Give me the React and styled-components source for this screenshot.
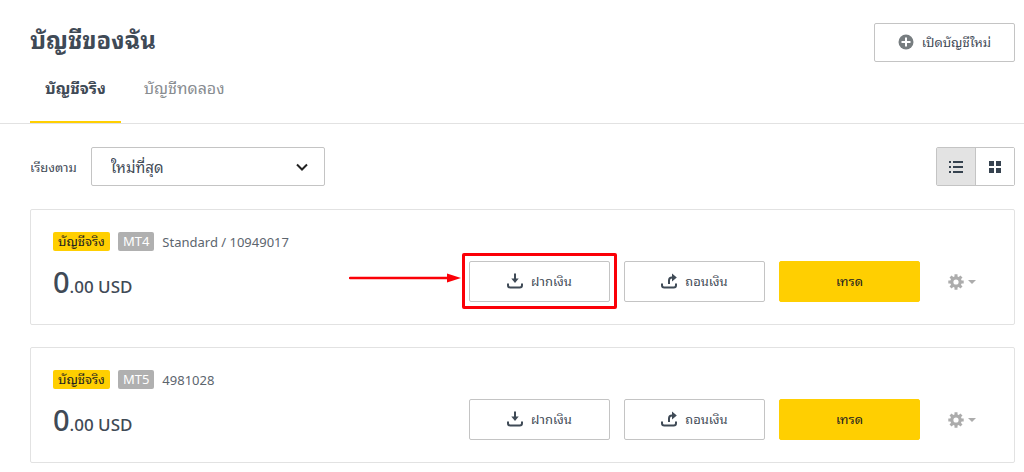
import React from "react";
import styled, { createGlobalStyle, css } from "styled-components";

const COLORS = {
  text: "#3f4a56",
  textLight: "#888c90",
  border: "#c4c4c4",
  line: "#e2e2e2",
  accent: "#ffcf01",
  callout: "#fb0007",
};

const GlobalStyle = createGlobalStyle`
  * {
    box-sizing: border-box;
  }

  body {
    margin: 0;
    background: #fff;
    color: ${COLORS.text};
    font-family: "Noto Sans", "Noto Sans Thai Looped", "Noto Looped Thai", Loma, Garuda, Waree, sans-serif;
    font-size: 13px;
    line-height: 20px;
  }

  button,
  select {
    font: inherit;
    color: inherit;
  }

  h1,
  p {
    margin: 0;
  }
`;

const Header = styled.header`
  display: flex;
  align-items: flex-start;
  justify-content: space-between;
  padding: 23px 9px 0 30px;
  border-bottom: 1px solid ${COLORS.line};
`;

const Title = styled.h1`
  font-size: 24px;
  font-weight: 700;
  line-height: 33px;
`;

const Tabs = styled.nav`
  display: flex;
  gap: 8px;
`;

const Tab = styled.a`
  height: 67px;
  padding: 20px 15px 0;
  font-size: 16px;
  line-height: 24px;
  text-decoration: none;
  color: ${({ $active }) => ($active ? COLORS.text : COLORS.textLight)};
  font-weight: ${({ $active }) => ($active ? 700 : 400)};
  border-bottom: 2px solid
    ${({ $active }) => ($active ? COLORS.accent : "transparent")};
`;

const Button = styled.button`
  display: flex;
  align-items: center;
  justify-content: center;
  gap: 8px;
  width: 141px;
  height: ${({ $compact }) => ($compact ? "39px" : "41px")};
  padding: 0 0 2px;
  background: #fff;
  border: 1px solid ${COLORS.border};
  border-radius: 2px;
  white-space: nowrap;
  cursor: pointer;

  ${({ $primary }) =>
    $primary &&
    css`
      background: ${COLORS.accent};
      border-color: ${COLORS.accent};
      color: #222;
    `}
`;

const Toolbar = styled.div`
  display: flex;
  align-items: center;
  justify-content: space-between;
  padding: 23px 9px 23px 30px;
`;

const Sort = styled.div`
  display: flex;
  align-items: center;
  gap: 14px;
`;

const SelectWrapper = styled.div`
  display: grid;
  align-items: center;
  width: 234px;

  & > * {
    grid-area: 1 / 1;
  }

  & svg {
    justify-self: end;
    margin-right: 16px;
    pointer-events: none;
  }
`;

const Select = styled.select`
  appearance: none;
  width: 100%;
  height: 39px;
  padding: 0 40px 0 19px;
  font-size: 15px;
  background: #fff;
  border: 1px solid ${COLORS.border};
  border-radius: 2px;
`;

const ViewSwitch = styled.div`
  display: flex;
  border: 1px solid ${COLORS.border};
  border-radius: 2px;
`;

const ViewButton = styled.button`
  display: flex;
  align-items: center;
  justify-content: center;
  width: 38px;
  height: 37px;
  padding: 0;
  border: none;
  background: ${({ $active }) => ($active ? "#e3e3e3" : "#fff")};
  cursor: pointer;

  & + & {
    width: 39px;
    border-left: 1px solid ${COLORS.border};
  }
`;

const AccountList = styled.main`
  display: grid;
  gap: 22px;
  padding: 0 9px 7px 30px;
`;

const Card = styled.article`
  display: flex;
  align-items: flex-start;
  justify-content: space-between;
  padding: 22px 38px 17px 22px;
  border: 1px solid ${COLORS.line};
  border-radius: 2px;
`;

const Labels = styled.div`
  display: flex;
  align-items: center;
  gap: 8px;
  height: 19px;
  white-space: nowrap;
`;

const Badge = styled.span`
  height: 19px;
  padding: 0 5px;
  line-height: 19px;
  border-radius: 2px;
  background: ${({ $real }) => ($real ? COLORS.accent : "#b0b0b0")};
  color: ${({ $real }) => ($real ? "#222" : "#fff")};
`;

const Name = styled.span`
  color: #5c656e;
`;

const Balance = styled.p`
  display: flex;
  align-items: baseline;
  margin-top: 11px;
  font-size: 17px;
  font-weight: 500;
  line-height: 40px;
`;

const Whole = styled.span`
  font-size: 29px;
`;

const Actions = styled.div`
  display: flex;
  align-items: center;
  gap: 14px;
  padding-top: 29px;
`;

const Highlight = styled.div`
  position: relative;
`;

const Frame = styled.span`
  position: absolute;
  inset: -8px -7px -7px;
  border: 3px solid ${COLORS.callout};
  border-radius: 2px;
  pointer-events: none;
`;

const Arrow = styled.svg`
  position: absolute;
  top: 11px;
  right: 100%;
  margin-right: 8px;
  pointer-events: none;
`;

const SettingsButton = styled.button`
  display: flex;
  align-items: center;
  gap: 4px;
  margin-left: 14px;
  padding: 0;
  border: none;
  background: none;
  cursor: pointer;
`;

const PlusIcon = () => (
  <svg width="16" height="16" viewBox="0 0 16 16" aria-hidden="true">
    <circle cx="8" cy="8" r="7.5" fill="#777d80" />
    <path d="M8 3.5v9M3.5 8h9" stroke="#fff" strokeWidth="2" />
  </svg>
);

const ChevronIcon = () => (
  <svg width="14" height="10" viewBox="0 0 14 10" fill="none" aria-hidden="true">
    <path d="M2 2.5l5 5 5-5" stroke="#222" strokeWidth="2" />
  </svg>
);

const ListIcon = () => (
  <svg width="14" height="12" viewBox="0 0 14 12" fill="#36424f" aria-hidden="true">
    <path d="M0 0h2v2H0zM4 0h10v2H4zM0 5h2v2H0zM4 5h10v2H4zM0 10h2v2H0zM4 10h10v2H4z" />
  </svg>
);

const GridIcon = () => (
  <svg width="12" height="12" viewBox="0 0 12 12" fill="#36424f" aria-hidden="true">
    <path d="M0 0h5v5H0zM7 0h5v5H7zM0 7h5v5H0zM7 7h5v5H7z" />
  </svg>
);

const DepositIcon = () => (
  <svg
    width="16"
    height="16"
    viewBox="0 0 16 16"
    fill="none"
    stroke="#3f4a56"
    strokeWidth="2"
    aria-hidden="true"
  >
    <path d="M8 0.5v8" />
    <path d="M4.3 5.6h7.4L8 10z" fill="#3f4a56" stroke="none" />
    <path d="M1 10.5v1.700q0 2.300 2.300 2.300h9.400q2.300 0 2.300-2.300v-1.700" />
  </svg>
);

const WithdrawIcon = () => (
  <svg
    width="16"
    height="16"
    viewBox="0 0 16 16"
    fill="none"
    stroke="#3f4a56"
    strokeWidth="2"
    aria-hidden="true"
  >
    <path d="M8 11V7.600q0-3 3-3h1" />
    <path d="M11 0.600l4.800 4-4.800 4z" fill="#3f4a56" stroke="none" />
    <path d="M1 10.500v1.700q0 2.300 2.300 2.300h9.400q2.300 0 2.300-2.300v-1.700" />
  </svg>
);

const GearIcon = () => (
  <svg width="16" height="16" viewBox="0 0 16 16" fill="none" aria-hidden="true">
    <circle cx="8" cy="8" r="4.200" stroke="#acacac" strokeWidth="3.200" />
    {[0, 45, 90, 135].map((angle) => (
      <path
        key={angle}
        d="M8 0.300v3M8 12.700v3"
        stroke="#acacac"
        strokeWidth="3"
        transform={`rotate(${angle} 8 8)`}
      />
    ))}
  </svg>
);

const CaretIcon = () => (
  <svg width="8" height="4" viewBox="0 0 8 4" fill="#acacac" aria-hidden="true">
    <path d="M0 0h8L4 4z" />
  </svg>
);

const accounts = [
  { platform: "MT4", name: "Standard / 10949017", highlighted: true },
  { platform: "MT5", name: "4981028", highlighted: false },
];

const Account = ({ platform, name, highlighted }) => (
  <Card>
    <div>
      <Labels>
        <Badge $real>บัญชีจริง</Badge>
        <Badge>{platform}</Badge>
        <Name>{name}</Name>
      </Labels>
      <Balance>
        <Whole>0</Whole>.00 USD
      </Balance>
    </div>
    <Actions>
      <Highlight>
        <Button type="button">
          <DepositIcon />
          ฝากเงิน
        </Button>
        {highlighted && (
          <>
            <Frame />
            <Arrow width="112" height="12" viewBox="0 0 112 12" aria-hidden="true">
              <path d="M1 6h98" stroke={COLORS.callout} strokeWidth="2.400" strokeLinecap="round" />
              <path d="M98 1.500L112 6l-14 4.500z" fill={COLORS.callout} />
            </Arrow>
          </>
        )}
      </Highlight>
      <Button type="button">
        <WithdrawIcon />
        ถอนเงิน
      </Button>
      <Button type="button" $primary>
        เทรด
      </Button>
      <SettingsButton type="button" aria-label="ตั้งค่า">
        <GearIcon />
        <CaretIcon />
      </SettingsButton>
    </Actions>
  </Card>
);

const App = () => {
  const [view, setView] = React.useState("list");

  return (
    <>
      <GlobalStyle />
      <Header>
        <div>
          <Title>บัญชีของฉัน</Title>
          <Tabs>
            <Tab href="#real" $active>
              บัญชีจริง
            </Tab>
            <Tab href="#demo">บัญชีทดลอง</Tab>
          </Tabs>
        </div>
        <Button type="button" $compact>
          <PlusIcon />
          เปิดบัญชีใหม่
        </Button>
      </Header>
      <Toolbar>
        <Sort>
          <label htmlFor="sort">เรียงตาม</label>
          <SelectWrapper>
            <Select id="sort">
              <option>ใหม่ที่สุด</option>
            </Select>
            <ChevronIcon />
          </SelectWrapper>
        </Sort>
        <ViewSwitch>
          <ViewButton
            type="button"
            aria-label="รายการ"
            $active={view === "list"}
            onClick={() => setView("list")}
          >
            <ListIcon />
          </ViewButton>
          <ViewButton
            type="button"
            aria-label="ตาราง"
            $active={view === "grid"}
            onClick={() => setView("grid")}
          >
            <GridIcon />
          </ViewButton>
        </ViewSwitch>
      </Toolbar>
      <AccountList>
        {accounts.map((account) => (
          <Account key={account.name} {...account} />
        ))}
      </AccountList>
    </>
  );
};

export default App;
